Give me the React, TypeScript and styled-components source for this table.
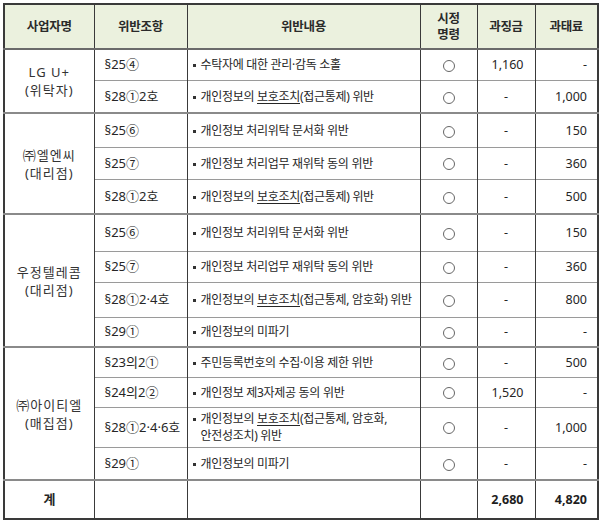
import React from 'react'
import styled, { createGlobalStyle, css } from 'styled-components'

const GlobalStyle = createGlobalStyle`
  html, body {
    margin: 0;
    padding: 0;
    background: #ffffff;
  }
  body {
    font-family: 'Noto Sans', 'Noto Sans CJK KR', sans-serif;
    color: #262626;
  }
`

const Page = styled.div`
  padding: 3px 0 0 3px;
  width: 600px;
  height: 523px;
  box-sizing: border-box;
`

const Table = styled.table`
  border-collapse: collapse;
  table-layout: fixed;
  width: 594px;
  border: 2px solid #3a3a3a;
  font-size: 12px;
  letter-spacing: -0.3px;
`

const Row = styled.tr<{ h: number; groupStart?: boolean }>`
  height: ${({ h }) => h}px;
  ${({ groupStart }) =>
    groupStart &&
    css`
      & > td {
        border-top: 2px solid #8a8a8a;
      }
    `}
`

const Head = styled.th`
  background: #ebf1de;
  font-weight: 700;
  font-size: 12.5px;
  color: #2a2a2a;
  line-height: 16px;
  padding: 0;
  border-left: 1px solid #3a3a3a;
  border-bottom: 2px solid #6a6a6a;
`

const Cell = styled.td<{ align?: 'left' | 'center' | 'right'; pad?: number }>`
  padding: 0 ${({ pad }) => pad ?? 0}px;
  text-align: ${({ align }) => align ?? 'left'};
  vertical-align: middle;
  border-left: 1px solid #3a3a3a;
  border-top: 1px solid #9a9a9a;
  line-height: 15px;
  white-space: nowrap;
`

const Company = styled(Cell)`
  text-align: center;
  font-size: 13px;
  letter-spacing: 1px;
  line-height: 18px;
  color: #333;
  border-top: 2px solid #8a8a8a;
`

const Article = styled(Cell)`
  padding-left: 10px;
  font-size: 13px;
  letter-spacing: 0;
`

const Content = styled(Cell)`
  padding-left: 5px;
  white-space: normal;
  line-height: 17px;
`

const Bullet = styled.div`
  display: flex;
  gap: 5px;
  &::before {
    content: '';
    flex: none;
    width: 3px;
    height: 3px;
    background: #333;
    margin-top: 8px;
  }
`

const Under = styled.span`
  text-decoration: underline;
  text-underline-offset: 2px;
`

const Circle = styled.span`
  display: inline-block;
  width: 10px;
  height: 10px;
  border: 1px solid #666;
  border-radius: 50%;
  vertical-align: middle;
`

const Num = styled(Cell)<{ bold?: boolean }>`
  font-size: 12.5px;
  letter-spacing: 0;
  ${({ bold }) =>
    bold &&
    css`
      font-weight: 700;
      color: #1e1e1e;
    `}
`

const Total = styled(Cell)`
  text-align: center;
  font-weight: 700;
  font-size: 13px;
`

type Item = {
  art: string
  text: React.ReactNode
  fine: string
  fee: string
  h: number
}

type Group = { name: string; role: string; items: Item[] }

const protect = (rest: React.ReactNode) => (
  <>
    개인정보의 <Under>보호조치</Under>
    {rest}
  </>
)

const groups: Group[] = [
  {
    name: 'LG U+',
    role: '(위탁자)',
    items: [
      { art: '§25④', text: '수탁자에 대한 관리·감독 소홀', fine: '1,160', fee: '-', h: 31 },
      { art: '§28①2호', text: protect('(접근통제) 위반'), fine: '-', fee: '1,000', h: 33 },
    ],
  },
  {
    name: '㈜엘엔씨',
    role: '(대리점)',
    items: [
      { art: '§25⑥', text: '개인정보 처리위탁 문서화 위반', fine: '-', fee: '150', h: 34 },
      { art: '§25⑦', text: '개인정보 처리업무 재위탁 동의 위반', fine: '-', fee: '360', h: 32 },
      { art: '§28①2호', text: protect('(접근통제) 위반'), fine: '-', fee: '500', h: 35 },
    ],
  },
  {
    name: '우정텔레콤',
    role: '(대리점)',
    items: [
      { art: '§25⑥', text: '개인정보 처리위탁 문서화 위반', fine: '-', fee: '150', h: 37 },
      { art: '§25⑦', text: '개인정보 처리업무 재위탁 동의 위반', fine: '-', fee: '360', h: 31 },
      { art: '§28①2·4호', text: protect('(접근통제, 암호화) 위반'), fine: '-', fee: '800', h: 35 },
      { art: '§29①', text: '개인정보의 미파기', fine: '-', fee: '-', h: 30 },
    ],
  },
  {
    name: '㈜아이티엘',
    role: '(매집점)',
    items: [
      { art: '§23의2①', text: '주민등록번호의 수집·이용 제한 위반', fine: '-', fee: '500', h: 30 },
      { art: '§24의2②', text: '개인정보 제3자제공 동의 위반', fine: '1,520', fee: '-', h: 30 },
      {
        art: '§28①2·4·6호',
        text: protect(
          <>
            (접근통제, 암호화,
            <br />
            안전성조치) 위반
          </>
        ),
        fine: '-',
        fee: '1,000',
        h: 40,
      },
      { art: '§29①', text: '개인정보의 미파기', fine: '-', fee: '-', h: 33 },
    ],
  },
]

export default function App() {
  return (
    <Page>
      <GlobalStyle />
      <Table>
        <colgroup>
          <col style={{ width: 90 }} />
          <col style={{ width: 93 }} />
          <col style={{ width: 233 }} />
          <col style={{ width: 57 }} />
          <col style={{ width: 58 }} />
          <col style={{ width: 63 }} />
        </colgroup>
        <thead>
          <Row h={45}>
            <Head>사업자명</Head>
            <Head>위반조항</Head>
            <Head>위반내용</Head>
            <Head>
              시정
              <br />
              명령
            </Head>
            <Head>과징금</Head>
            <Head>과태료</Head>
          </Row>
        </thead>
        <tbody>
          {groups.map((g) =>
            g.items.map((it, i) => (
              <Row key={g.name + i} h={it.h} groupStart={i === 0}>
                {i === 0 && (
                  <Company rowSpan={g.items.length}>
                    {g.name}
                    <br />
                    {g.role}
                  </Company>
                )}
                <Article>{it.art}</Article>
                <Content>
                  <Bullet>
                    <span>{it.text}</span>
                  </Bullet>
                </Content>
                <Cell align="center">
                  <Circle />
                </Cell>
                <Num align={it.fine === '-' ? 'center' : 'right'} pad={it.fine === '-' ? 0 : 11}>
                  {it.fine}
                </Num>
                <Num align="right" pad={10}>
                  {it.fee}
                </Num>
              </Row>
            ))
          )}
          <Row h={39} groupStart>
            <Total>계</Total>
            <Cell />
            <Cell />
            <Cell />
            <Num align="right" pad={11} bold>
              2,680
            </Num>
            <Num align="right" pad={10} bold>
              4,820
            </Num>
          </Row>
        </tbody>
      </Table>
    </Page>
  )
}
